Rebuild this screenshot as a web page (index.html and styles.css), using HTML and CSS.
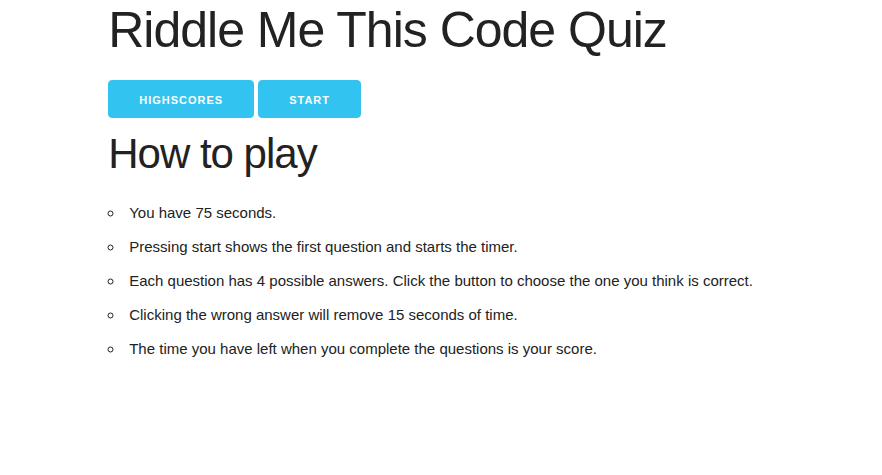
FILE: index.html
```html
<!DOCTYPE html>
<html>
<head>
<meta charset="utf-8">
<title>Riddle Me This Code Quiz</title>
<link rel="stylesheet" href="styles.css">
</head>
<body>
<div class="container">
  <h1 class="title">Riddle Me This Code Quiz</h1>
  <div class="actions">
    <button class="button-primary">Highscores</button>
    <button class="button-primary">Start</button>
  </div>
  <h2 class="subtitle">How to play</h2>
  <ul class="rules">
    <li>You have 75 seconds.</li>
    <li>Pressing start shows the first question and starts the timer.</li>
    <li>Each question has 4 possible answers. Click the button to choose the one you think is correct.</li>
    <li>Clicking the wrong answer will remove 15 seconds of time.</li>
    <li>The time you have left when you complete the questions is your score.</li>
  </ul>
</div>
</body>
</html>
```
FILE: styles.css
```css
html { font-size: 62.5%; }
body {
  margin: 0;
  font-size: 1.5em;
  line-height: 1.6;
  font-weight: 400;
  font-family: "Liberation Sans", Arial, Helvetica, sans-serif;
  color: #222;
  background: #fff;
}
.container {
  width: 80%;
  max-width: 960px;
  margin: 0 auto;
  padding: 0 20px;
  box-sizing: border-box;
}
.title {
  margin: 0 0 2rem;
  font-size: 5rem;
  line-height: 1.2;
  letter-spacing: -0.1rem;
  font-weight: 300;
}
.actions { display: flex; gap: 4px; }
.button-primary {
  display: inline-block;
  height: 38px;
  padding: 2px 30px 0;
  color: #fff;
  background-color: #33C3F0;
  border: 1px solid #33C3F0;
  border-radius: 4px;
  text-align: center;
  font-family: "Liberation Sans", Arial, sans-serif;
  font-size: 11px;
  font-weight: 600;
  line-height: 34px;
  letter-spacing: 0.1rem;
  text-transform: uppercase;
  white-space: nowrap;
  cursor: pointer;
  box-sizing: border-box;
  margin: 0 0 1rem;
}
.subtitle {
  margin: 0 0 2rem;
  font-size: 4.2rem;
  line-height: 1.25;
  letter-spacing: -0.1rem;
  font-weight: 300;
}
.rules {
  list-style: circle inside;
  padding-left: 0;
  margin: 0;
}
.rules li { margin-bottom: 1rem; }
```
